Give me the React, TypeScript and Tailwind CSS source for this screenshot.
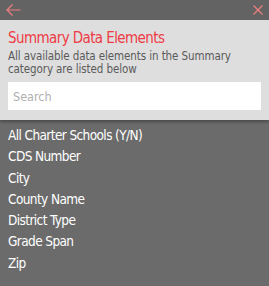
const items = [
  "All Charter Schools (Y/N)",
  "CDS Number",
  "City",
  "County Name",
  "District Type",
  "Grade Span",
  "Zip",
];

export default function App() {
  return (
    <div className="w-[269px] h-[286px] bg-[#6b6b6b] font-['DejaVu_Sans_Condensed','Open_Sans',sans-serif] overflow-hidden">
      {/* Top bar */}
      <div className="h-5 bg-[#636363] flex items-center justify-between pl-1.5 pr-1.5">
        <svg width="15" height="12" viewBox="0 0 15 12" fill="none" stroke="#f27f7f" strokeWidth="1.2">
          <path d="M14.5 6H1M6.5 0.5L1 6l5.5 5.5" />
        </svg>
        <svg width="10" height="10" viewBox="0 0 10 10" fill="none" stroke="#f27f7f" strokeWidth="1.2">
          <path d="M0.5 0.5l9 9M9.5 0.5l-9 9" />
        </svg>
      </div>

      {/* Header panel */}
      <div className="bg-[#dedede] px-2 pt-2 pb-[10px] shadow-[0_2px_3px_rgba(0,0,0,0.3)] relative">
        <h1 className="text-[#ee3b45] text-[15px] leading-5 tracking-[-0.6px]">Summary Data Elements</h1>
        <p className="text-[#5a5a5a] text-[11.5px] leading-[13px] mt-[2px] tracking-[-0.1px]">
          All available data elements in the Summary category are listed below
        </p>
        <input
          placeholder="Search"
          className="mt-[6px] w-full h-7 bg-white px-[5px] text-[12.5px] placeholder:text-[#b0b0b0] outline-none"
        />
      </div>

      {/* List */}
      <ul className="pt-[5px] px-2 text-white text-[13.5px] tracking-[-0.6px]">
        {items.map((item) => (
          <li key={item} className="h-[21.3px] leading-[21.3px]">
            {item}
          </li>
        ))}
      </ul>
    </div>
  );
}
